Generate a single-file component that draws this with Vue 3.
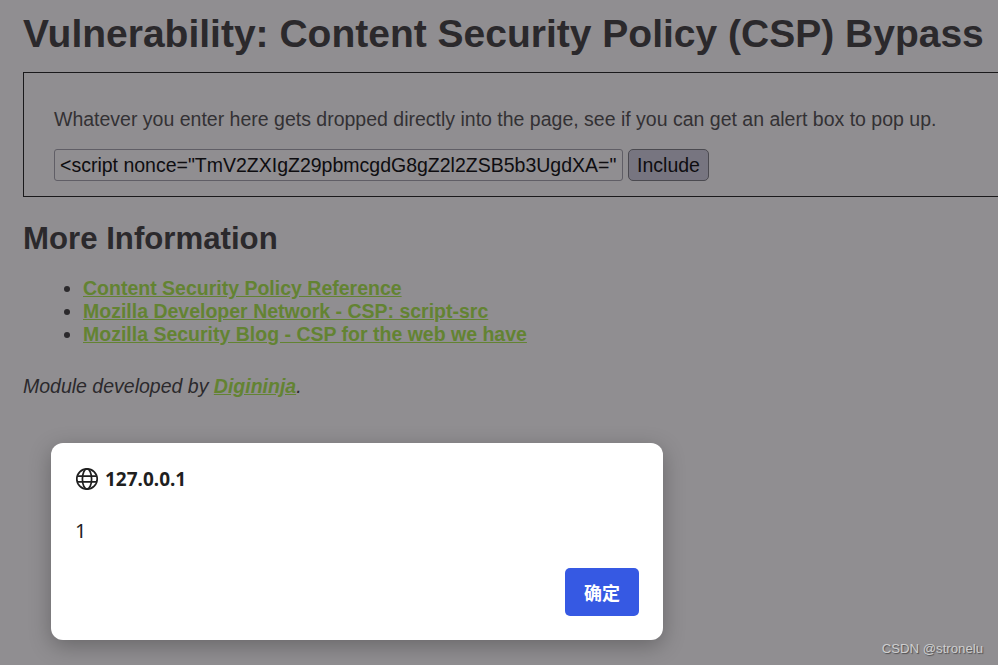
<template>
  <div class="page">
    <div class="body">
      <h1>Vulnerability: Content Security Policy (CSP) Bypass</h1>

      <div class="vulnerable_code_area">
        <p>Whatever you enter here gets dropped directly into the page, see if you can get an alert box to pop up.</p>
        <form class="include-form" @submit.prevent>
          <input class="include-input" type="text" :value="payload" />
          <button class="include-btn" type="button">Include</button>
        </form>
      </div>

      <h2>More Information</h2>
      <ul>
        <li v-for="link in links" :key="link"><a href="#">{{ link }}</a></li>
      </ul>

      <p class="credit">Module developed by <a href="#">Digininja</a>.</p>
    </div>

    <div class="alert-box">
      <div class="alert-title">
        <svg class="globe" viewBox="0 0 24 24" width="24" height="24" fill="none" stroke="#1f1f1f" stroke-width="1.7">
          <circle cx="12" cy="12" r="10.2" />
          <ellipse cx="12" cy="12" rx="4.6" ry="10.2" />
          <path d="M2.4 9.2h19.2M2.4 14.8h19.2" />
        </svg>
        <span>127.0.0.1</span>
      </div>
      <div class="alert-text">1</div>
      <div class="alert-actions">
        <button class="ok-btn" type="button">确定</button>
      </div>
    </div>

    <div class="watermark">CSDN @stronelu</div>
  </div>
</template>

<script setup>
const payload = '<script nonce="TmV2ZXIgZ29pbmcgdG8gZ2l2ZSB5b3UgdXA="'
const links = [
  'Content Security Policy Reference',
  'Mozilla Developer Network - CSP: script-src',
  'Mozilla Security Blog - CSP for the web we have'
]
</script>

<style>
html, body {
  margin: 0;
  overflow: hidden;
}
</style>

<style scoped>
.page {
  position: relative;
  width: 998px;
  height: 665px;
  overflow: hidden;
  background: #908e91;
  color: #2b292c;
  font-family: "Liberation Sans", Arial, sans-serif;
}
.body {
  padding-left: 23px;
  width: 1100px;
}
h1 {
  margin: 0;
  padding-top: 12px;
  font-size: 39px;
  line-height: 43px;
  font-weight: bold;
}
.vulnerable_code_area {
  margin-top: 17px;
  height: 123px;
  border: 1px solid #1a191b;
  padding: 0 30px;
}
.vulnerable_code_area p {
  margin: 0;
  padding-top: 35px;
  font-size: 19.5px;
  line-height: 23px;
  color: #333134;
}
.include-form {
  display: flex;
  gap: 5px;
  margin-top: 18px;
}
.include-input {
  width: 569px;
  height: 32px;
  box-sizing: border-box;
  padding: 0 5px;
  background: #908e91;
  border: 1px solid #605e66;
  border-radius: 3px;
  color: #0e0d10;
  font-family: inherit;
  font-size: 19.5px;
}
.include-btn {
  width: 81px;
  height: 32px;
  box-sizing: border-box;
  padding: 0;
  background: #777580;
  border: 1px solid #4b4a50;
  border-radius: 5px;
  color: #0e0d10;
  font-family: inherit;
  font-size: 19.5px;
}
h2 {
  margin: 24px 0 0;
  font-size: 31.2px;
  line-height: 35px;
  font-weight: bold;
}
ul {
  margin: 21px 0 0;
  padding-left: 60px;
}
li {
  font-size: 19.5px;
  line-height: 23px;
  font-weight: bold;
}
a {
  color: #638332;
  font-weight: bold;
  text-decoration: underline;
}
.credit {
  margin: 29px 0 0;
  font-size: 19.5px;
  line-height: 23px;
  font-style: italic;
}
.alert-box {
  position: absolute;
  left: 51px;
  top: 443px;
  width: 612px;
  height: 197px;
  box-sizing: border-box;
  padding: 24px;
  background: #fff;
  border-radius: 12px;
  box-shadow: 0 6px 22px rgba(0, 0, 0, 0.28);
  color: #1f1f1f;
  font-family: "Noto Sans", "Open Sans", sans-serif;
}
.alert-title {
  display: flex;
  align-items: center;
  gap: 6px;
  font-size: 19px;
  line-height: 24px;
  font-weight: 700;
}
.alert-text {
  margin-top: 28px;
  font-size: 20px;
  line-height: 24px;
}
.alert-actions {
  display: flex;
  justify-content: flex-end;
  margin-top: 25px;
}
.ok-btn {
  width: 74px;
  height: 48px;
  padding: 0;
  background: #3659e3;
  border: none;
  border-radius: 5px;
  color: #fff;
  font-family: "Noto Sans CJK SC", "Noto Sans", sans-serif;
  font-size: 18px;
  font-weight: 700;
}
.watermark {
  position: absolute;
  right: 15px;
  bottom: 9px;
  color: #cfcfcf;
  font-family: "Liberation Sans", Arial, sans-serif;
  font-size: 13.2px;
  line-height: 14px;
  text-shadow: 1px 1px 1px rgba(0, 0, 0, 0.45);
}
</style>
